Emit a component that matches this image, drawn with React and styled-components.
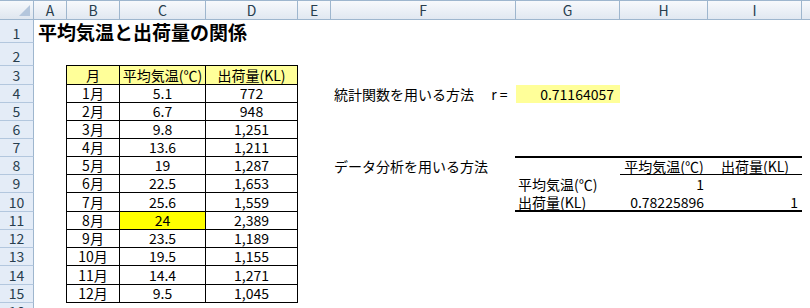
import React from "react";
import styled, { createGlobalStyle } from "styled-components";

// J is only a sliver at the right edge, its letter sits out of view
const COL_LETTERS = ["A", "B", "C", "D", "E", "F", "G", "H", "I", ""];
const COL_WIDTHS = [34, 33, 53, 86, 92, 33, 185, 104, 88, 94, 94];
// first entry is the column header strip, then rows 1..16
const ROW_HEIGHTS = [20, 23, 23, 19, 18, 18, 18, 18, 18, 18, 19, 18, 18, 18, 19, 18, 18];

const px = (list) => list.map((n) => `${n}px`).join(" ");

const GlobalStyle = createGlobalStyle`
  html, body {
    margin: 0;
    padding: 0;
    background: #fff;
    overflow: hidden;
  }
  body {
    font-family: "Noto Sans CJK JP", "Noto Sans", sans-serif;
  }
`;

const Sheet = styled.div`
  display: grid;
  grid-template-columns: ${px(COL_WIDTHS)};
  grid-template-rows: ${px(ROW_HEIGHTS)};
  width: 810px;
  height: 308px;
  overflow: hidden;
  background: #fff;
  color: #000;
  font-family: "Noto Sans CJK JP", "Noto Sans", sans-serif;
  font-size: 14px;
`;

const Corner = styled.div`
  grid-row: 1;
  grid-column: 1;
  display: flex;
  justify-content: flex-end;
  align-items: flex-end;
  box-sizing: border-box;
  background: linear-gradient(#f6f9fc, #dfe6ef);
  border-top: 1px solid #9eb6ce;
  border-right: 1px solid #9eb6ce;
  border-bottom: 1px solid #9eb6ce;
`;

const CornerMark = styled.span`
  width: 0;
  height: 0;
  border-left: 11px solid transparent;
  border-bottom: 11px solid #b4c6dc;
  margin: 0 3px 3px 0;
`;

const ColHead = styled.div`
  grid-row: 1;
  grid-column: ${({ $col }) => $col};
  display: flex;
  align-items: center;
  justify-content: center;
  box-sizing: border-box;
  background: linear-gradient(#f7f9fc, #e1e8f1);
  border-top: 1px solid #9eb6ce;
  border-right: 1px solid #9eb6ce;
  border-bottom: 1px solid #9eb6ce;
  color: #283e4e;
  font-size: 14px;
  line-height: 16px;
  overflow: hidden;
`;

const RowHead = styled.div`
  grid-row: ${({ $row }) => $row};
  grid-column: 1;
  display: flex;
  align-items: flex-end;
  justify-content: center;
  box-sizing: border-box;
  background: #e4ecf7;
  border-right: 1px solid #9eb6ce;
  border-bottom: 1px solid #b3c7de;
  color: #283e4e;
  font-size: 14px;
  line-height: 16px;
  padding-bottom: 1px;
`;

const Title = styled.div`
  grid-row: 2;
  grid-column: 2 / 8;
  display: flex;
  align-items: center;
  padding-left: 4px;
  font-size: 19px;
  font-weight: bold;
  line-height: 22px;
  white-space: nowrap;
`;

const Cell = styled.div`
  grid-row: ${({ $row }) => $row};
  grid-column: ${({ $col }) => $col};
  display: flex;
  align-items: center;
  justify-content: ${({ $align }) =>
    $align === "right" ? "flex-end" : $align === "center" ? "center" : "flex-start"};
  padding: 0 ${({ $align }) => ($align === "right" ? "6px" : "0")} 0
    ${({ $align }) => ($align === "left" ? "3px" : "0")};
  background: ${({ $bg }) => $bg || "transparent"};
  font-size: 14px;
  line-height: 16px;
  white-space: nowrap;
`;

const DataTable = styled.div`
  grid-row: 4 / span 13;
  grid-column: 3 / span 3;
  margin: -1px 0 0 -1px;
  display: grid;
  grid-template-columns: 53px 86px 92px;
  grid-template-rows: ${px(ROW_HEIGHTS.slice(3, 16))};
  border-top: 1px solid #000;
  border-left: 1px solid #000;
`;

const TableCell = styled.div`
  display: flex;
  align-items: center;
  justify-content: center;
  box-sizing: border-box;
  border-right: 1px solid #000;
  border-bottom: 1px solid #000;
  background: ${({ $bg }) => $bg || "#fff"};
  font-size: 14px;
  line-height: 16px;
  padding-bottom: 1px;
  white-space: nowrap;
`;

const CorrTable = styled.div`
  grid-row: 9 / span 3;
  grid-column: 8 / span 3;
  margin: -1px 0 0 -1px;
  display: grid;
  grid-template-columns: 105px 88px 94px;
  grid-template-rows: 17px 18px 17px;
  border-top: 2px solid #000;
  border-bottom: 2px solid #000;
`;

const CorrCell = styled.div`
  display: flex;
  align-items: center;
  justify-content: ${({ $align }) =>
    $align === "right" ? "flex-end" : $align === "center" ? "center" : "flex-start"};
  box-sizing: border-box;
  padding: 0 ${({ $align }) => ($align === "right" ? "4px" : "0")} 0
    ${({ $align }) => ($align === "left" ? "3px" : "0")};
  border-bottom: ${({ $rule }) => ($rule ? "1px solid #000" : "none")};
  font-size: 14px;
  line-height: 16px;
  white-space: nowrap;
`;

const HEADER = ["月", "平均気温(℃)", "出荷量(KL)"];

const MONTHS = [
  ["1月", "5.1", "772"],
  ["2月", "6.7", "948"],
  ["3月", "9.8", "1,251"],
  ["4月", "13.6", "1,211"],
  ["5月", "19", "1,287"],
  ["6月", "22.5", "1,653"],
  ["7月", "25.6", "1,559"],
  ["8月", "24", "2,389"],
  ["9月", "23.5", "1,189"],
  ["10月", "19.5", "1,155"],
  ["11月", "14.4", "1,271"],
  ["12月", "9.5", "1,045"],
];

const CORRELATION = [
  [
    { text: "" },
    { text: "平均気温(℃)", align: "center", rule: true },
    { text: "出荷量(KL)", align: "center", rule: true },
  ],
  [
    { text: "平均気温(℃)", align: "left" },
    { text: "1", align: "right" },
    { text: "" },
  ],
  [
    { text: "出荷量(KL)", align: "left" },
    { text: "0.78225896", align: "right" },
    { text: "1", align: "right" },
  ],
];

export default function App() {
  return (
    <>
      <GlobalStyle />
      <Sheet>
        <Corner>
          <CornerMark />
        </Corner>
        {COL_LETTERS.map((letter, i) => (
          <ColHead key={i} $col={i + 2}>
            {letter}
          </ColHead>
        ))}
        {ROW_HEIGHTS.slice(1).map((_, i) => (
          <RowHead key={i} $row={i + 2}>
            {i + 1}
          </RowHead>
        ))}

        <Title>平均気温と出荷量の関係</Title>

        <DataTable>
          {HEADER.map((h) => (
            <TableCell key={h} $bg="#ffff99">
              {h}
            </TableCell>
          ))}
          {MONTHS.map(([month, temp, amount]) => (
            <React.Fragment key={month}>
              <TableCell>{month}</TableCell>
              <TableCell $bg={month === "8月" ? "#ffff00" : undefined}>{temp}</TableCell>
              <TableCell>{amount}</TableCell>
            </React.Fragment>
          ))}
        </DataTable>

        <Cell $row={5} $col={7} $align="left">
          統計関数を用いる方法　 r =
        </Cell>
        <Cell $row={5} $col={8} $align="right" $bg="#ffff99">
          0.71164057
        </Cell>

        <Cell $row={9} $col={7} $align="left">
          データ分析を用いる方法
        </Cell>
        <CorrTable>
          {CORRELATION.map((row, r) =>
            row.map((c, k) => (
              <CorrCell key={`${r}-${k}`} $align={c.align} $rule={c.rule}>
                {c.text}
              </CorrCell>
            ))
          )}
        </CorrTable>
      </Sheet>
    </>
  );
}
